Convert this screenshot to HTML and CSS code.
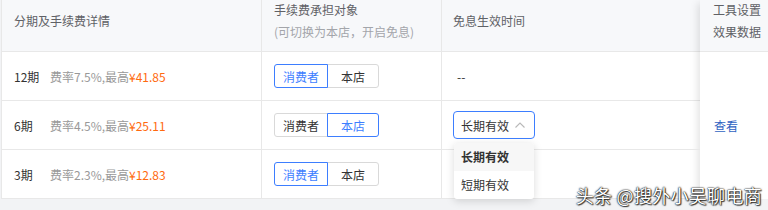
FILE: index.html
```html
<!DOCTYPE html>
<html lang="zh-CN">
<head>
<meta charset="utf-8">
<link rel="stylesheet" href="styles.css">
</head>
<body>
<div class="table">
  <div class="main">
    <div class="cell head c1"><span>分期及手续费详情</span></div>
    <div class="cell head c2"><div>手续费承担对象</div><div class="sub">(可切换为本店，开启免息)</div></div>
    <div class="cell head c3"><span>免息生效时间</span></div>

    <div class="cell c1"><span class="period">12期</span><span class="rate">费率7.5%,最高</span><span class="max">¥41.85</span></div>
    <div class="cell c2"><div class="toggle"><span class="opt active">消费者</span><span class="opt">本店</span></div></div>
    <div class="cell c3"><span class="dash">--</span></div>

    <div class="cell c1"><span class="period">6期</span><span class="rate">费率4.5%,最高</span><span class="max">¥25.11</span></div>
    <div class="cell c2"><div class="toggle"><span class="opt">消费者</span><span class="opt active">本店</span></div></div>
    <div class="cell c3 over">
      <div class="select-wrap">
        <div class="select"><span>长期有效</span><svg class="chev" width="10" height="6" viewBox="0 0 10 6"><path d="M0.5 5.5 L5 1 L9.5 5.5" fill="none" stroke="#b8b8b8" stroke-width="1.1"/></svg></div>
        <div class="dropdown">
          <div class="item selected">长期有效</div>
          <div class="item">短期有效</div>
        </div>
      </div>
    </div>

    <div class="cell c1"><span class="period">3期</span><span class="rate">费率2.3%,最高</span><span class="max">¥12.83</span></div>
    <div class="cell c2"><div class="toggle"><span class="opt active">消费者</span><span class="opt">本店</span></div></div>
    <div class="cell c3"></div>
  </div>
  <div class="fixed">
    <div class="fhead"><div>工具设置</div><div>效果数据</div></div>
    <div class="fcell"></div>
    <div class="fcell"><span class="link">查看</span></div>
    <div class="fcell"></div>
  </div>
</div>
<div class="watermark">头条 @搜外小吴聊电商</div>
</body>
</html>
```

FILE: styles.css
```css
html, body {
  margin: 0;
  padding: 0;
}
body {
  width: 768px;
  height: 210px;
  overflow: hidden;
  background: #f2f3f5;
  font-family: "Noto Sans CJK SC", "Noto Sans", sans-serif;
  font-size: 12px;
  color: #333;
  position: relative;
}
.table {
  display: flex;
  align-items: flex-start;
  padding-left: 1px;
  background: #f2f3f5;
}
.main {
  width: 698px;
  border-left: 1px solid #e8e8e8;
  background: #fff;
  display: grid;
  grid-template-columns: 260px 180px 258px;
  grid-template-rows: 52px 49px 49px 49px;
}
.cell {
  box-sizing: border-box;
  border-bottom: 1px solid #e8e8e8;
  border-right: 1px solid #e8e8e8;
  padding: 0 12px;
  display: flex;
  align-items: center;
  white-space: nowrap;
}
.cell.c3 {
  border-right: none;
  padding-left: 11px;
}
.cell.head {
  background: #f7f8fa;
  color: #5f6166;
  padding-bottom: 10px;
  flex-direction: column;
  justify-content: center;
  align-items: flex-start;
  line-height: 22px;
}
.cell.head.c3 { padding-left: 11px; }
.sub {
  color: #a3a5aa;
}
.period {
  display: inline-block;
  width: 36px;
  color: #333;
}
.rate {
  color: #999;
}
.max {
  color: #ff6a0f;
}
.toggle {
  display: flex;
  height: 24px;
}
.opt {
  box-sizing: border-box;
  height: 24px;
  display: flex;
  align-items: center;
  justify-content: center;
  border: 1px solid #d9d9d9;
  color: #333;
}
.opt:first-child {
  width: 54px;
  border-radius: 3px 0 0 3px;
}
.opt:last-child {
  width: 52px;
  border-radius: 0 3px 3px 0;
  margin-left: -1px;
}
.opt.active {
  border-color: #3d7eff;
  color: #3d7eff;
  position: relative;
  z-index: 1;
}
.dash {
  color: #333;
  padding-left: 4px;
}
.over {
  position: relative;
  z-index: 3;
  overflow: visible;
}
.select-wrap {
  position: relative;
}
.select {
  box-sizing: border-box;
  width: 82px;
  height: 28px;
  border: 1px solid #3d7eff;
  border-radius: 4px;
  display: flex;
  align-items: center;
  justify-content: space-between;
  padding: 0 9px 0 7px;
  color: #333;
}
.chev {
  display: block;
}
.dropdown {
  position: absolute;
  left: 1px;
  top: 32px;
  width: 80px;
  background: #fff;
  border-radius: 3px;
  box-shadow: 0 2px 8px rgba(0, 0, 0, 0.15);
  overflow: hidden;
}
.item {
  height: 28px;
  line-height: 28px;
  padding-left: 7px;
  color: #333;
}
.item.selected {
  background: #f7f7f7;
  font-weight: 600;
}
.fixed {
  width: 68px;
  background: #fff;
  position: relative;
  z-index: 2;
  box-shadow: -5px 0 8px -3px rgba(0, 0, 0, 0.12);
}
.fhead {
  box-sizing: border-box;
  height: 52px;
  background: #f7f8fa;
  border-bottom: 1px solid #e8e8e8;
  padding: 0 0 10px 13px;
  display: flex;
  flex-direction: column;
  justify-content: center;
  line-height: 22px;
  color: #5f6166;
}
.fcell {
  height: 49px;
  display: flex;
  align-items: center;
  padding-left: 14px;
}
.link {
  color: #2f63c2;
}
.watermark {
  position: absolute;
  right: 6px;
  top: 183px;
  font-size: 18px;
  line-height: 24px;
  letter-spacing: 0.3px;
  color: #fff;
  font-family: "Noto Sans CJK SC", sans-serif;
  text-shadow: 0 0 1px #000, 0 0 2px #000, 1px 1px 1px rgba(0,0,0,0.7);
  z-index: 5;
  white-space: nowrap;
}
```
